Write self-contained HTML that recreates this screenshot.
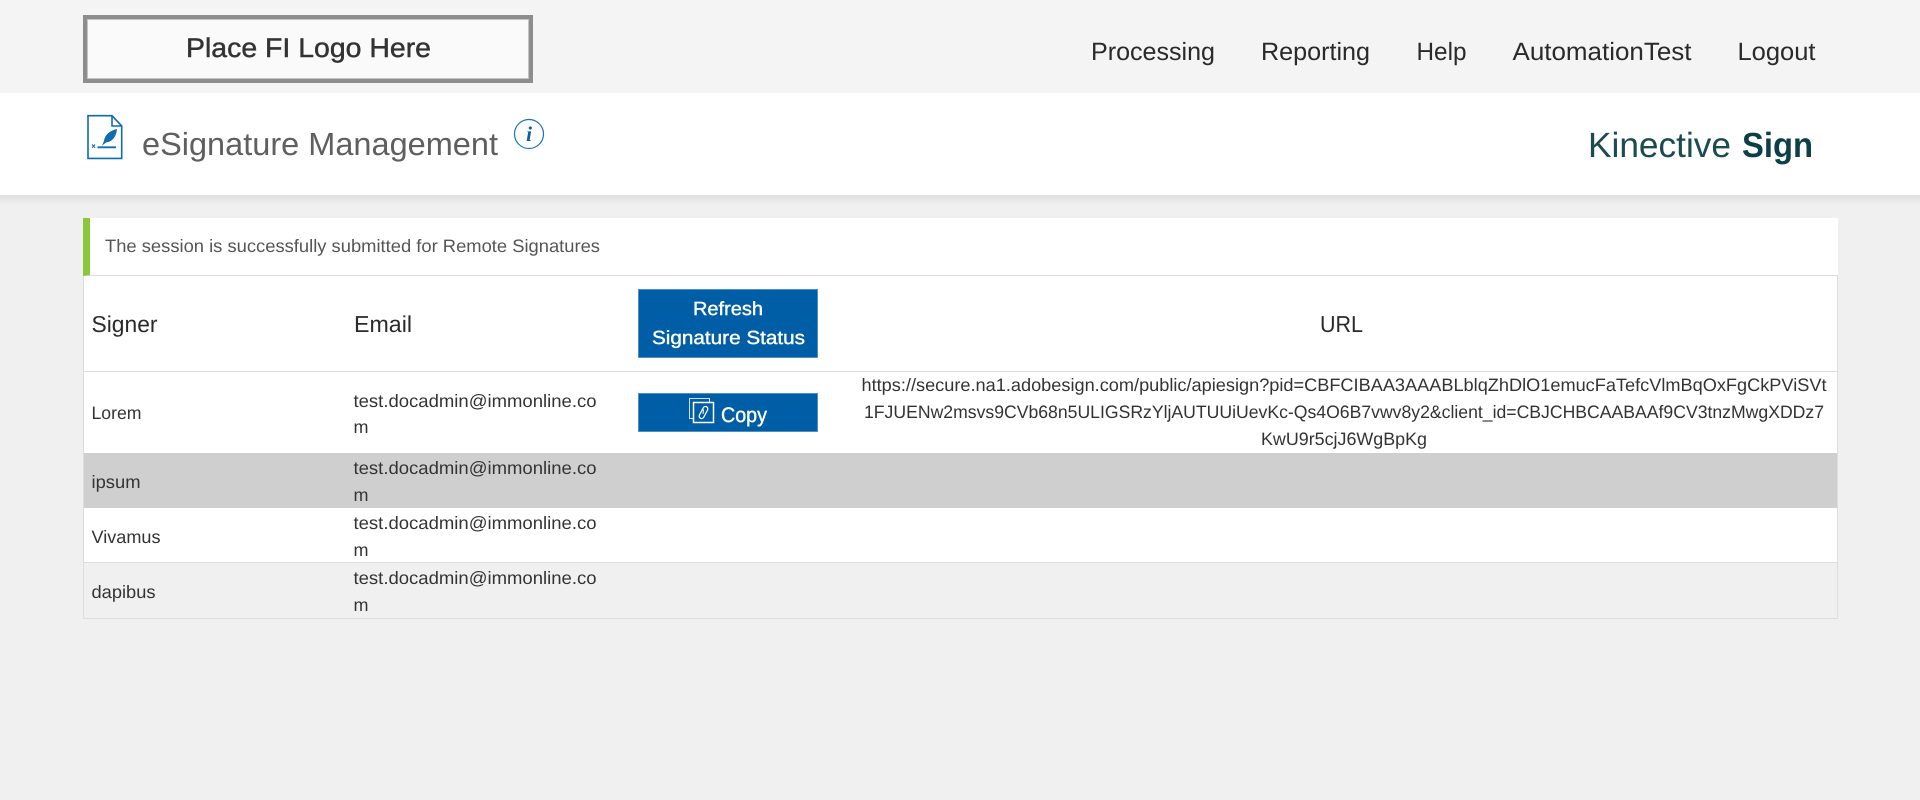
<!DOCTYPE html>
<html lang="en">
<head>
<meta charset="utf-8">
<title>eSignature Management</title>
<style>
html,body{margin:0;padding:0;width:1920px;height:800px;overflow:hidden;background:#f0f0f0;font-family:"Liberation Sans",sans-serif}
.b{position:absolute;box-sizing:border-box}
svg{position:absolute;left:0;top:0}
text{font-family:"Liberation Sans",sans-serif;text-rendering:geometricPrecision}
</style>
</head>
<body>
<div class="b" style="left:0;top:195px;width:1920px;height:10px;background:linear-gradient(#dedede,#f0f0f0)"></div>
<div class="b" style="left:0;top:0;width:1920px;height:93px;background:#f4f4f4"></div>
<div class="b" style="left:0;top:93px;width:1920px;height:102px;background:#fff"></div>
<div class="b" style="left:83px;top:15px;width:450px;height:68px;background:#fafafa;border:4px solid #8d8d8d;outline:1px solid #c4c4c4;outline-offset:-5px"></div>

<div class="b" style="left:83px;top:218px;width:1755px;height:58px;background:#fff;border-left:7px solid #8cc63f;border-bottom:1px solid #ddd"></div>
<div class="b" style="left:83px;top:276px;width:1755px;height:96px;background:#fff;border-left:1px solid #ddd;border-right:1px solid #ddd;border-bottom:1px solid #ddd"></div>
<div class="b" style="left:83px;top:372px;width:1755px;height:81px;background:#fff;border-left:1px solid #ddd;border-right:1px solid #ddd"></div>
<div class="b" style="left:83px;top:453px;width:1755px;height:55px;background:#cfcfcf;border-left:1px solid #ddd;border-right:1px solid #ddd"></div>
<div class="b" style="left:83px;top:508px;width:1755px;height:55px;background:#fff;border-left:1px solid #ddd;border-right:1px solid #ddd;border-bottom:1px solid #ddd"></div>
<div class="b" style="left:83px;top:563px;width:1755px;height:56px;background:#f0f0f0;border-left:1px solid #ddd;border-right:1px solid #ddd;border-bottom:1px solid #ddd"></div>

<div class="b" style="left:638px;top:289px;width:180px;height:69px;background:#005ea6;border:1px solid #4f8fc2"></div>
<div class="b" style="left:638px;top:393px;width:180px;height:39px;background:#005ea6;border:1px solid #4f8fc2"></div>

<svg width="1920" height="800" viewBox="0 0 1920 800" xmlns="http://www.w3.org/2000/svg">
  <!-- logo -->
  <text x="186" y="57" font-size="27" fill="#333" stroke="#333" stroke-width=".45" textLength="245" lengthAdjust="spacingAndGlyphs">Place FI Logo Here</text>

  <!-- nav -->
  <g font-size="25" fill="#2a2a2a">
    <text x="1091" y="60" textLength="124" lengthAdjust="spacingAndGlyphs">Processing</text>
    <text x="1261" y="60" textLength="109" lengthAdjust="spacingAndGlyphs">Reporting</text>
    <text x="1416.5" y="60" textLength="50" lengthAdjust="spacingAndGlyphs">Help</text>
    <text x="1512.5" y="60" textLength="179" lengthAdjust="spacingAndGlyphs">AutomationTest</text>
    <text x="1737.5" y="60" textLength="78" lengthAdjust="spacingAndGlyphs">Logout</text>
  </g>

  <!-- document icon -->
  <g fill="none" stroke="#0f6cb0" stroke-width="1.6">
    <path d="M88 115.7H112L121.7 126V158.4H88Z"/>
    <path d="M112 115.7V126H121.7"/>
  </g>
  <path d="M117 129C109.5 130.5 104.5 135.5 104 141L102 145.5L106.5 142.3C112.5 142 116.5 136 117 129Z" fill="#0f6cb0"/>
  <path d="M97.5 147.3H116" stroke="#0f6cb0" stroke-width="1.8"/>
  <path d="M92 144.5L95 147.8M95 144.5L92 147.8" stroke="#0f6cb0" stroke-width="1"/>

  <text x="142" y="155" font-size="32" fill="#5f5f5f" textLength="356" lengthAdjust="spacingAndGlyphs">eSignature Management</text>

  <!-- info icon -->
  <circle cx="529" cy="134" r="14.5" fill="none" stroke="#1a74b6" stroke-width="1.2"/>
  <text x="529" y="141" font-size="21" font-weight="bold" font-style="italic" fill="#0a5ea8" text-anchor="middle" style="font-family:'Liberation Serif',serif">i</text>

  <!-- brand -->
  <text x="1588" y="157" font-size="35" fill="#1a4a52" textLength="143" lengthAdjust="spacingAndGlyphs">Kinective</text>
  <text x="1742" y="157" font-size="35" font-weight="bold" fill="#0d3f46" textLength="71" lengthAdjust="spacingAndGlyphs">Sign</text>

  <!-- alert -->
  <text x="105" y="252" font-size="18" fill="#555" textLength="495" lengthAdjust="spacingAndGlyphs">The session is successfully submitted for Remote Signatures</text>

  <!-- table header -->
  <g font-size="23" fill="#2a2a2a">
    <text x="91.5" y="332" textLength="66" lengthAdjust="spacingAndGlyphs">Signer</text>
    <text x="354" y="332" textLength="58" lengthAdjust="spacingAndGlyphs">Email</text>
    <text x="1320" y="332" textLength="43" lengthAdjust="spacingAndGlyphs">URL</text>
  </g>

  <!-- buttons -->
  <g fill="#fff" stroke="#fff" stroke-width=".4" font-size="19">
    <text x="693" y="315" textLength="70" lengthAdjust="spacingAndGlyphs">Refresh</text>
    <text x="652" y="344" textLength="153" lengthAdjust="spacingAndGlyphs">Signature Status</text>
    <text x="721" y="422" font-size="21" textLength="46" lengthAdjust="spacingAndGlyphs">Copy</text>
  </g>
  <g fill="none" stroke="#fff">
    <path d="M693 418.5H689.5V398.5H709.5V402" stroke-width="1" stroke="#cfe0ee"/>
    <rect x="693.5" y="402.5" width="20" height="20" stroke-width="1.5"/>
    <rect x="-2.4" y="-6.5" width="4.8" height="13" rx="2.4" transform="translate(703.5 412.5) rotate(28)" stroke-width="1.3"/>
    <path d="M703.5 409.5L703 414" stroke-width="1"/>
  </g>

  <!-- rows -->
  <g font-size="18" fill="#333">
    <text x="91.5" y="419" textLength="50" lengthAdjust="spacingAndGlyphs">Lorem</text>
    <text x="353.5" y="407" textLength="243" lengthAdjust="spacingAndGlyphs">test.docadmin@immonline.co</text>
    <text x="353.5" y="433" textLength="15" lengthAdjust="spacingAndGlyphs">m</text>

    <text x="91.5" y="488" textLength="49" lengthAdjust="spacingAndGlyphs">ipsum</text>
    <text x="353.5" y="474" textLength="243" lengthAdjust="spacingAndGlyphs">test.docadmin@immonline.co</text>
    <text x="353.5" y="501" textLength="15" lengthAdjust="spacingAndGlyphs">m</text>

    <text x="91.5" y="543" textLength="69" lengthAdjust="spacingAndGlyphs">Vivamus</text>
    <text x="353.5" y="529" textLength="243" lengthAdjust="spacingAndGlyphs">test.docadmin@immonline.co</text>
    <text x="353.5" y="556" textLength="15" lengthAdjust="spacingAndGlyphs">m</text>

    <text x="91.5" y="598" textLength="64" lengthAdjust="spacingAndGlyphs">dapibus</text>
    <text x="353.5" y="584" textLength="243" lengthAdjust="spacingAndGlyphs">test.docadmin@immonline.co</text>
    <text x="353.5" y="611" textLength="15" lengthAdjust="spacingAndGlyphs">m</text>

    <text x="861.5" y="391" textLength="965" lengthAdjust="spacingAndGlyphs">https://secure.na1.adobesign.com/public/apiesign?pid=CBFCIBAA3AAABLblqZhDlO1emucFaTefcVlmBqOxFgCkPViSVt</text>
    <text x="864" y="418" textLength="960" lengthAdjust="spacingAndGlyphs">1FJUENw2msvs9CVb68n5ULIGSRzYljAUTUUiUevKc-Qs4O6B7vwv8y2&amp;client_id=CBJCHBCAABAAf9CV3tnzMwgXDDz7</text>
    <text x="1261" y="445" textLength="166" lengthAdjust="spacingAndGlyphs">KwU9r5cjJ6WgBpKg</text>
  </g>
</svg>
</body>
</html>
